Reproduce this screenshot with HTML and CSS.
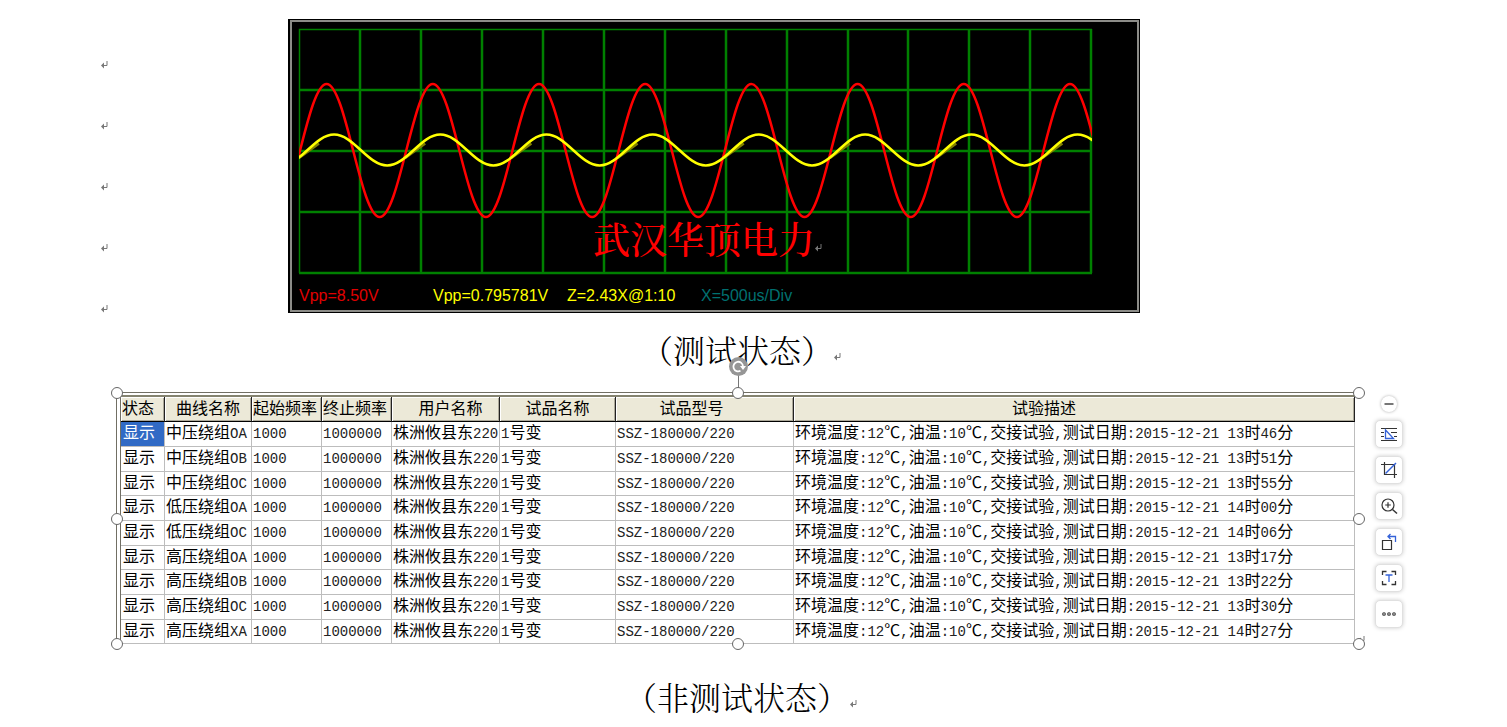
FILE: index.html
```html
<!DOCTYPE html>
<html lang="zh-CN">
<head>
<meta charset="utf-8">
<title>测试状态</title>
<link rel="stylesheet" href="styles.css">
</head>
<body>
<svg class="defs" aria-hidden="true">
  <symbol id="mark" viewBox="0 0 7 8"><path d="M6 0v4.500H3" fill="none" stroke="#777"/><path d="M0 4.500 3 1.500v6z" fill="#777"/></symbol>
</svg>
<main class="doc">
  <section class="scope-row">
    <div class="marks">
      <svg class="mark"><use href="#mark"/></svg>
      <svg class="mark"><use href="#mark"/></svg>
      <svg class="mark"><use href="#mark"/></svg>
      <svg class="mark"><use href="#mark"/></svg>
      <svg class="mark"><use href="#mark"/></svg>
    </div>
    <svg class="scope" viewBox="0 0 852 294" role="img" aria-label="示波器波形">
      <clipPath id="plot"><rect x="11" y="10" width="793" height="245"/></clipPath>
      <rect width="852" height="294" fill="#000"/>
      <rect x="3" y="2" width="847" height="290" fill="none" stroke="#8c8c88" stroke-width="2"/>
      <g fill="none">
        <path stroke="#004000" stroke-width="3" d="M72 10V254M133 10V254M194 10V254M255 10V254M316 10V254M377 10V254M438 10V254M499 10V254M560 10V254M620 10V254M681 10V254M742 10V254M803 10V254M11 71H804M11 132H804M11 193H804M11 254H804"/>
        <path stroke="#008000" stroke-width="2" d="M72 10V254M133 10V254M194 10V254M255 10V254M316 10V254M377 10V254M438 10V254M499 10V254M560 10V254M620 10V254M681 10V254M742 10V254M803 10V254M11 71H804M11 132H804M11 193H804M11 254H804"/>
        <path stroke="#008000" stroke-width="1.500" d="M11.500 254V10.500H804"/>
      </g>
      <g clip-path="url(#plot)" fill="none" stroke-width="2.500">
        <path stroke="#f00" d="M-14.500 198c19.300 0 33.800-133 53.100-133s33.800 133 53.100 133s33.800-133 53.100-133s33.800 133 53.100 133s33.800-133 53.100-133s33.800 133 53.100 133s33.800-133 53.100-133s33.800 133 53.100 133s33.800-133 53.100-133s33.800 133 53.100 133s33.800-133 53.100-133s33.800 133 53.100 133s33.800-133 53.100-133s33.800 133 53.100 133s33.800-133 53.100-133s33.800 133 53.100 133"/>
        <path stroke="#808000" d="M11 139l20-14.500m86.200 14.500l20-14.500m86.200 14.500l20-14.500m86.200 14.500l20-14.500m86.200 14.500l20-14.500m86.200 14.500l20-14.500m86.200 14.500l20-14.500m86.200 14.500l20-14.500"/>
        <path stroke="#ff0" d="M-7 146.500c19.300 0 33.800-31 53.100-31s33.800 31 53.100 31s33.800-31 53.100-31s33.800 31 53.100 31s33.800-31 53.100-31s33.800 31 53.100 31s33.800-31 53.100-31s33.800 31 53.100 31s33.800-31 53.100-31s33.800 31 53.100 31s33.800-31 53.100-31s33.800 31 53.100 31s33.800-31 53.100-31s33.800 31 53.100 31s33.800-31 53.100-31s33.800 31 53.100 31"/>
      </g>
      <text class="watermark" x="305" y="235">武汉华顶电力</text>
      <use href="#mark" x="527" y="225" width="7" height="8"/>
      <text class="reading red" x="11" y="282">Vpp=8.50V</text>
      <text class="reading yellow" x="145" y="282">Vpp=0.795781V</text>
      <text class="reading yellow" x="279" y="282">Z=2.43X@1:10</text>
      <text class="reading teal" x="413" y="282">X=500us/Div</text>
    </svg>
  </section>

  <p class="caption">（测试状态）<svg class="mark"><use href="#mark"/></svg></p>

  <section class="picture">
    <table class="records">
      <colgroup><col class="c-state"><col class="c-curve"><col class="c-freq"><col class="c-freq"><col class="c-user"><col class="c-name"><col class="c-model"><col></colgroup>
      <thead>
        <tr><th class="start">状态</th><th>曲线名称</th><th class="start">起始频率</th><th class="start">终止频率</th><th class="user">用户名称</th><th>试品名称</th><th class="model">试品型号</th><th class="desc">试验描述</th></tr>
      </thead>
      <tbody>
        <tr><td class="selected">显示</td><td>中压绕组<span>OA</span></td><td><span>1000</span></td><td><span>1000000</span></td><td>株洲攸县东<span>220</span></td><td><span>1</span>号变</td><td><span>SSZ-180000/220</span></td><td>环境温度<span>:12</span>℃<span>,</span>油温<span>:10</span>℃<span>,</span>交接试验<span>,</span>测试日期<span>:2015-12-21 13</span>时<span>46</span>分</td></tr>
        <tr><td>显示</td><td>中压绕组<span>OB</span></td><td><span>1000</span></td><td><span>1000000</span></td><td>株洲攸县东<span>220</span></td><td><span>1</span>号变</td><td><span>SSZ-180000/220</span></td><td>环境温度<span>:12</span>℃<span>,</span>油温<span>:10</span>℃<span>,</span>交接试验<span>,</span>测试日期<span>:2015-12-21 13</span>时<span>51</span>分</td></tr>
        <tr><td>显示</td><td>中压绕组<span>OC</span></td><td><span>1000</span></td><td><span>1000000</span></td><td>株洲攸县东<span>220</span></td><td><span>1</span>号变</td><td><span>SSZ-180000/220</span></td><td>环境温度<span>:12</span>℃<span>,</span>油温<span>:10</span>℃<span>,</span>交接试验<span>,</span>测试日期<span>:2015-12-21 13</span>时<span>55</span>分</td></tr>
        <tr><td>显示</td><td>低压绕组<span>OA</span></td><td><span>1000</span></td><td><span>1000000</span></td><td>株洲攸县东<span>220</span></td><td><span>1</span>号变</td><td><span>SSZ-180000/220</span></td><td>环境温度<span>:12</span>℃<span>,</span>油温<span>:10</span>℃<span>,</span>交接试验<span>,</span>测试日期<span>:2015-12-21 14</span>时<span>00</span>分</td></tr>
        <tr><td>显示</td><td>低压绕组<span>OC</span></td><td><span>1000</span></td><td><span>1000000</span></td><td>株洲攸县东<span>220</span></td><td><span>1</span>号变</td><td><span>SSZ-180000/220</span></td><td>环境温度<span>:12</span>℃<span>,</span>油温<span>:10</span>℃<span>,</span>交接试验<span>,</span>测试日期<span>:2015-12-21 14</span>时<span>06</span>分</td></tr>
        <tr><td>显示</td><td>高压绕组<span>OA</span></td><td><span>1000</span></td><td><span>1000000</span></td><td>株洲攸县东<span>220</span></td><td><span>1</span>号变</td><td><span>SSZ-180000/220</span></td><td>环境温度<span>:12</span>℃<span>,</span>油温<span>:10</span>℃<span>,</span>交接试验<span>,</span>测试日期<span>:2015-12-21 13</span>时<span>17</span>分</td></tr>
        <tr><td>显示</td><td>高压绕组<span>OB</span></td><td><span>1000</span></td><td><span>1000000</span></td><td>株洲攸县东<span>220</span></td><td><span>1</span>号变</td><td><span>SSZ-180000/220</span></td><td>环境温度<span>:12</span>℃<span>,</span>油温<span>:10</span>℃<span>,</span>交接试验<span>,</span>测试日期<span>:2015-12-21 13</span>时<span>22</span>分</td></tr>
        <tr><td>显示</td><td>高压绕组<span>OC</span></td><td><span>1000</span></td><td><span>1000000</span></td><td>株洲攸县东<span>220</span></td><td><span>1</span>号变</td><td><span>SSZ-180000/220</span></td><td>环境温度<span>:12</span>℃<span>,</span>油温<span>:10</span>℃<span>,</span>交接试验<span>,</span>测试日期<span>:2015-12-21 13</span>时<span>30</span>分</td></tr>
        <tr><td>显示</td><td>高压绕组<span>XA</span></td><td><span>1000</span></td><td><span>1000000</span></td><td>株洲攸县东<span>220</span></td><td><span>1</span>号变</td><td><span>SSZ-180000/220</span></td><td>环境温度<span>:12</span>℃<span>,</span>油温<span>:10</span>℃<span>,</span>交接试验<span>,</span>测试日期<span>:2015-12-21 14</span>时<span>27</span>分</td></tr>
      </tbody>
    </table>

    <svg class="mark end-mark"><use href="#mark"/></svg>
    <i class="stem"></i>
    <button class="rotate" aria-label="旋转"><svg viewBox="0 0 19 19"><circle cx="9.500" cy="9.500" r="9.500" fill="#969696"/><path d="M11.500 13.800A4.800 4.800 0 1 1 14 9.500" fill="none" stroke="#fff" stroke-width="1.800"/><path d="M11 9h6l-3 4z" fill="#fff"/></svg></button>
    <i class="handle nw"></i><i class="handle n"></i><i class="handle ne"></i>
    <i class="handle w"></i><i class="handle e"></i>
    <i class="handle sw"></i><i class="handle s"></i><i class="handle se"></i>

    <div class="tools">
      <button class="collapse" aria-label="收起"><svg viewBox="0 0 16 16"><path d="M3.500 8h9" stroke="#777" stroke-width="2"/></svg></button>
      <button class="tool" aria-label="布局选项"><svg viewBox="0 0 18 18"><path d="M1 3.500h16M1 7.500h3M11 7.500h6M1 11.500h3M14 11.500h3M1 15.500h16" stroke="#333"/><path d="M5.500 5v8.500h8z" fill="#fff" stroke="#3462d8" stroke-width="1.300"/></svg></button>
      <button class="tool" aria-label="裁剪"><svg viewBox="0 0 18 18"><path d="M4.500 1v12.500H17M1 3.500h13.500V17" stroke="#333" stroke-width="1.200"/><path d="M5.500 12.500 16 2" stroke="#3462d8" stroke-width="1.500"/></svg></button>
      <button class="tool" aria-label="放大"><svg viewBox="0 0 18 18"><circle cx="8" cy="8" r="6" stroke="#333" stroke-width="1.200"/><path d="M8 5.200v5.600M5.200 8h5.600" stroke="#333" stroke-width="1.200"/><path d="m12.500 12.500 4.500 4" stroke="#333" stroke-width="1.500"/></svg></button>
      <button class="tool" aria-label="旋转图片"><svg viewBox="0 0 18 18"><path d="M2.500 7.500h9v9h-9z" stroke="#333" stroke-width="1.200"/><path d="M7.500 3.500H15.500V9M10.500 1 8 3.500 10.500 6" stroke="#3462d8" stroke-width="1.300"/></svg></button>
      <button class="tool" aria-label="提取文字"><svg viewBox="0 0 18 18"><path d="M6.500 2.500h-4v3.500M11.500 2.500h4v3.500M2.500 12v3.500h4M15.500 12v3.500h-4" stroke="#333" stroke-width="1.300"/><path d="M5.500 6h7M9 6v7" stroke="#3462d8" stroke-width="1.300"/></svg></button>
      <button class="tool" aria-label="更多"><svg viewBox="0 0 18 18"><g stroke="#333" stroke-width="1.100"><circle cx="4" cy="9" r="1.300"/><circle cx="9" cy="9" r="1.300"/><circle cx="14" cy="9" r="1.300"/></g></svg></button>
    </div>
  </section>

  <p class="caption last">（非测试状态）<svg class="mark"><use href="#mark"/></svg></p>
</main>
</body>
</html>
```
FILE: styles.css
```css
* { box-sizing: border-box; }
body { margin: 0; background: #fff; color: #000; font-family: "Noto Sans CJK SC", sans-serif; }
button { border: 0; padding: 0; cursor: pointer; }
.defs { position: absolute; width: 0; height: 0; }
.doc { padding: 19px 125px 0 100px; }
.mark { display: block; width: 7px; height: 8px; flex: none; }

.scope-row { display: flex; align-items: flex-start; padding-right: 242px; }
.marks { display: flex; flex-direction: column; gap: 53px; width: 188px; flex: none; padding: 42px 0 0 1px; }
.scope { display: block; flex: 1; min-width: 0; }
.watermark { font-family: "Noto Serif CJK SC", "Noto Sans CJK SC", serif; font-weight: 500; font-size: 37px; fill: #f00; }
.reading { font-family: "Liberation Sans", sans-serif; font-size: 16px; }
.red { fill: #e00000; }
.yellow { fill: #ff0; }
.teal { fill: #007070; }

.caption {
  display: flex; justify-content: center; align-items: center; margin: 0; padding-bottom: 4px; height: 76px;
  font-family: "Noto Serif CJK SC", "Noto Sans CJK SC", serif; font-weight: 300; font-size: 32px; line-height: 54px;
}
.caption .mark { margin: 16px 0 0 1px; }
.caption.last { height: 80px; padding-top: 28px; }

.picture {
  position: relative; margin: 3px 23px 0 16px; padding: 2px 4px 0 3px;
  border-top: 1px solid #716f64; border-left: 1px solid #716f64;
}
.records {
  width: 100%; table-layout: fixed; border-collapse: separate; border-spacing: 0;
  border-top: 2px solid #85836f; border-left: 1px solid #716f64; font-size: 16px;
}
.c-state { width: 44px; }
.c-curve { width: 87px; }
.c-freq { width: 70px; }
.c-user { width: 108px; }
.c-name { width: 116px; }
.c-model { width: 178px; }
.records th {
  height: 25px; padding: 0 2px 5px; font-weight: 400; line-height: 18px; white-space: nowrap;
  background: #ece9d8; border-right: 1px solid #222; border-bottom: 1px solid #000;
  box-shadow: inset 1px 1px #fff, inset -1px -1px #aca899;
}
.records th.start { text-align: left; padding-left: 1px; }
.records th.user { padding-left: 12px; }
.records th.model { padding-right: 28px; }
.records th.desc { padding-right: 62px; }
.records td {
  height: 25px; padding: 0 1px 5px; line-height: 18px; white-space: nowrap; vertical-align: top;
  border-right: 1px solid #bdbdbd; border-bottom: 1px solid #bdbdbd;
}
.records tr:nth-child(3n) td { height: 24px; }
.records td:first-child { padding-left: 2px; }
.records span { font-family: "Liberation Mono", monospace; font-size: 14px; line-height: 8px; color: #222; }
.records .selected { background: #316ac5; color: #fff; }

.handle { position: absolute; width: 12px; height: 12px; border: 1px solid #666; border-radius: 50%; background: #fff; transform: translate(-50%, -50%); }
.nw { left: 0; top: 0; }
.n { left: 50%; top: 0; }
.ne { left: 100%; top: 0; }
.w { left: 0; top: 50%; }
.e { left: 100%; top: 50%; }
.sw { left: 0; top: 100%; }
.s { left: 50%; top: 100%; }
.se { left: 100%; top: 100%; }
.stem { position: absolute; left: 50%; top: -18px; width: 1px; height: 14px; background: #777; }
.rotate { position: absolute; left: 50%; top: -36px; width: 19px; height: 19px; margin-left: -9px; background: none; }
.rotate svg { display: block; }
.end-mark { position: absolute; right: -6px; bottom: 0; }

.tools { position: absolute; left: 100%; top: 3px; margin-left: 16px; display: flex; flex-direction: column; align-items: center; gap: 8px; }
.collapse { width: 16px; height: 16px; border-radius: 50%; background: #fff; box-shadow: 0 0 3px #aaa; }
.collapse svg { display: block; }
.tool { display: grid; place-items: center; width: 28px; height: 28px; border-radius: 5px; background: #fff; border: 1px solid #e0e0e0; box-shadow: 0 0 4px #ccc; }
.tool svg { width: 18px; height: 18px; fill: none; }
```
